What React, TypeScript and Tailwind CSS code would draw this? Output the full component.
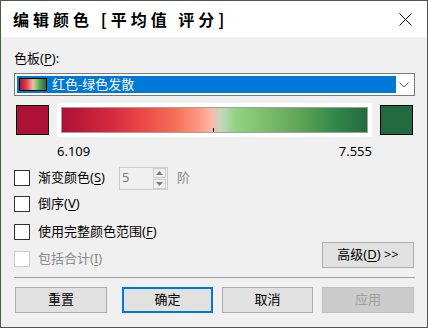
import { useState } from "react";

const font = "font-['Noto_Sans','Noto_Sans_CJK_SC',sans-serif]";

function Mn({ k }: { k: string }) {
  // mnemonic letter in parentheses, underlined like Windows dialogs
  return (
    <span>
      (<span className="underline underline-offset-2">{k}</span>)
    </span>
  );
}

function Check({ disabled = false }: { disabled?: boolean }) {
  return (
    <div
      className={
        disabled
          ? "w-[16px] h-[16px] shrink-0 border border-[#cccccc] bg-white"
          : "w-[16px] h-[16px] shrink-0 border border-[#333333] bg-white"
      }
    />
  );
}

function Btn({
  label,
  width,
  ml,
  primary = false,
  disabled = false,
}: {
  label: string;
  width: string;
  ml: string;
  primary?: boolean;
  disabled?: boolean;
}) {
  let cls = "h-[26px] flex items-center justify-center text-[13px] ";
  if (primary) cls += "border-2 border-[#0078d7] bg-[#e1e1e1] text-black";
  else if (disabled) cls += "border border-[#bfbfbf] bg-[#cccccc] text-[#a0a0a0]";
  else cls += "border border-[#adadad] bg-[#e1e1e1] text-black";
  return <div className={`${cls} ${width} ${ml}`}>{label}</div>;
}

export default function App() {
  const [steps] = useState(5);

  return (
    <div
      className={`w-[428px] h-[328px] border border-[#475b47] bg-[#f0f0f0] flex flex-col text-black ${font}`}
    >
      {/* 标题栏 */}
      <div className="h-[36px] bg-white flex items-center justify-between pl-[12px] pr-[14px] shrink-0">
        <div className="text-[16px] font-bold tracking-[4px] font-['Noto_Sans_CJK_SC',serif]">
          编辑颜色 [平均值 评分]
        </div>
        <svg width="13" height="13" viewBox="0 0 13 13" className="mr-[1px]">
          <path d="M0.5 0.5 L12.5 12.5 M12.5 0.5 L0.5 12.5" stroke="#000" strokeWidth="1" />
        </svg>
      </div>

      <div className="flex flex-col pl-[13px] pr-[12px]">
        <div className="mt-[12px] h-[18px] leading-[18px] text-[13px]">
          色板<Mn k="P" />:
        </div>

        {/* 下拉框 */}
        <div className="mt-[6px] h-[23px] border border-[#7a7a7a] bg-white p-[2px] flex">
          <div className="w-[379px] h-[17px] bg-[#0078d7] flex items-center">
            <div className="ml-[2px] w-[28px] h-[13px] border border-black bg-[linear-gradient(to_right,#ad1236_0%,#e0404a_25%,#fdb5a5_50%,#8fd07f_60%,#4d9a52_80%,#236b3f_100%)]" />
            <span className="ml-[5px] text-white text-[13px] leading-[17px]">红色-绿色发散</span>
          </div>
          <div className="flex-1 flex items-center justify-center">
            <svg width="10" height="6" viewBox="0 0 10 6">
              <path d="M0.5 0.5 L5 5 L9.5 0.5" fill="none" stroke="#555" strokeWidth="1" />
            </svg>
          </div>
        </div>

        {/* 色带 */}
        <div className="mt-[7px] h-[34px] flex items-center">
          <div className="ml-[2px] w-[33px] h-[30px] border border-black bg-[#ad1236]" />
          <div className="ml-[8px] w-[315px] h-[34px] bg-white p-[4px]">
            <div className="relative w-full h-full border border-[#a0a0a0] bg-[linear-gradient(to_right,#ad1236_0%,#d2283d_15%,#ee4d4a_28%,#f6735c_38%,#fc9a84_45%,#fdb6a6_49%,#c6d9bf_52%,#92d282_57%,#7cc06d_66%,#5fa556_78%,#33864a_90%,#236b3f_100%)]">
              <div className="absolute left-[151px] bottom-0 w-[1px] h-[4px] bg-black" />
            </div>
          </div>
          <div className="ml-[8px] w-[33px] h-[30px] border border-black bg-[#236b3f]" />
        </div>

        <div className="mt-[6px] ml-[43px] w-[315px] h-[16px] leading-[16px] text-[13px] flex justify-between">
          <span>6.109</span>
          <span>7.555</span>
        </div>

        {/* 选项 */}
        <div className="mt-[7px] h-[24px] flex items-center">
          <Check />
          <span className="ml-[8px] w-[81px] text-[13px]">
            渐变颜色<Mn k="S" />
          </span>
          <div className="w-[49px] h-[23px] border border-[#cccccc] flex items-center">
            <span className="ml-[2px] flex-1 text-[13px] text-[#7a7a7a]">{steps}</span>
            <div className="w-[13px] h-[21px] mr-[1px] flex flex-col gap-[1px]">
              <div className="flex-1 border border-[#cccccc] flex items-center justify-center">
                <svg width="7" height="4" viewBox="0 0 7 4">
                  <path d="M0 4 L3.5 0 L7 4 Z" fill="#7a7a7a" />
                </svg>
              </div>
              <div className="flex-1 border border-[#cccccc] flex items-center justify-center">
                <svg width="7" height="4" viewBox="0 0 7 4">
                  <path d="M0 0 L3.5 4 L7 0 Z" fill="#7a7a7a" />
                </svg>
              </div>
            </div>
          </div>
          <span className="ml-[9px] text-[13px] text-[#8a8a8a]">阶</span>
        </div>

        <div className="mt-[2px] h-[24px] flex items-center">
          <Check />
          <span className="ml-[8px] text-[13px]">
            倒序<Mn k="V" />
          </span>
        </div>

        <div className="mt-[5px] h-[21px] flex items-center">
          <Check />
          <span className="ml-[8px] text-[13px]">
            使用完整颜色范围<Mn k="F" />
          </span>
        </div>

        <div className="h-[26px] flex items-end justify-between">
          <div className="flex items-center h-[16px] mb-[1px]">
            <Check disabled />
            <span className="ml-[8px] text-[13px] text-[#8a8a8a]">
              包括合计<Mn k="I" />
            </span>
          </div>
          <div className="w-[92px] h-[26px] mr-[1px] border border-[#adadad] bg-[#e1e1e1] flex items-center justify-center text-[13px]">
            高级<Mn k="D" />&nbsp;&gt;&gt;
          </div>
        </div>

        <div className="mt-[9px] h-[1px] bg-[#a0a0a0]" />

        {/* 底部按钮 */}
        <div className="mt-[9px] flex">
          <Btn label="重置" width="w-[92px]" ml="ml-[1px]" />
          <Btn label="确定" width="w-[91px]" ml="ml-[15px]" primary />
          <Btn label="取消" width="w-[91px]" ml="ml-[9px]" />
          <Btn label="应用" width="w-[92px]" ml="ml-[9px]" disabled />
        </div>
      </div>
    </div>
  );
}
